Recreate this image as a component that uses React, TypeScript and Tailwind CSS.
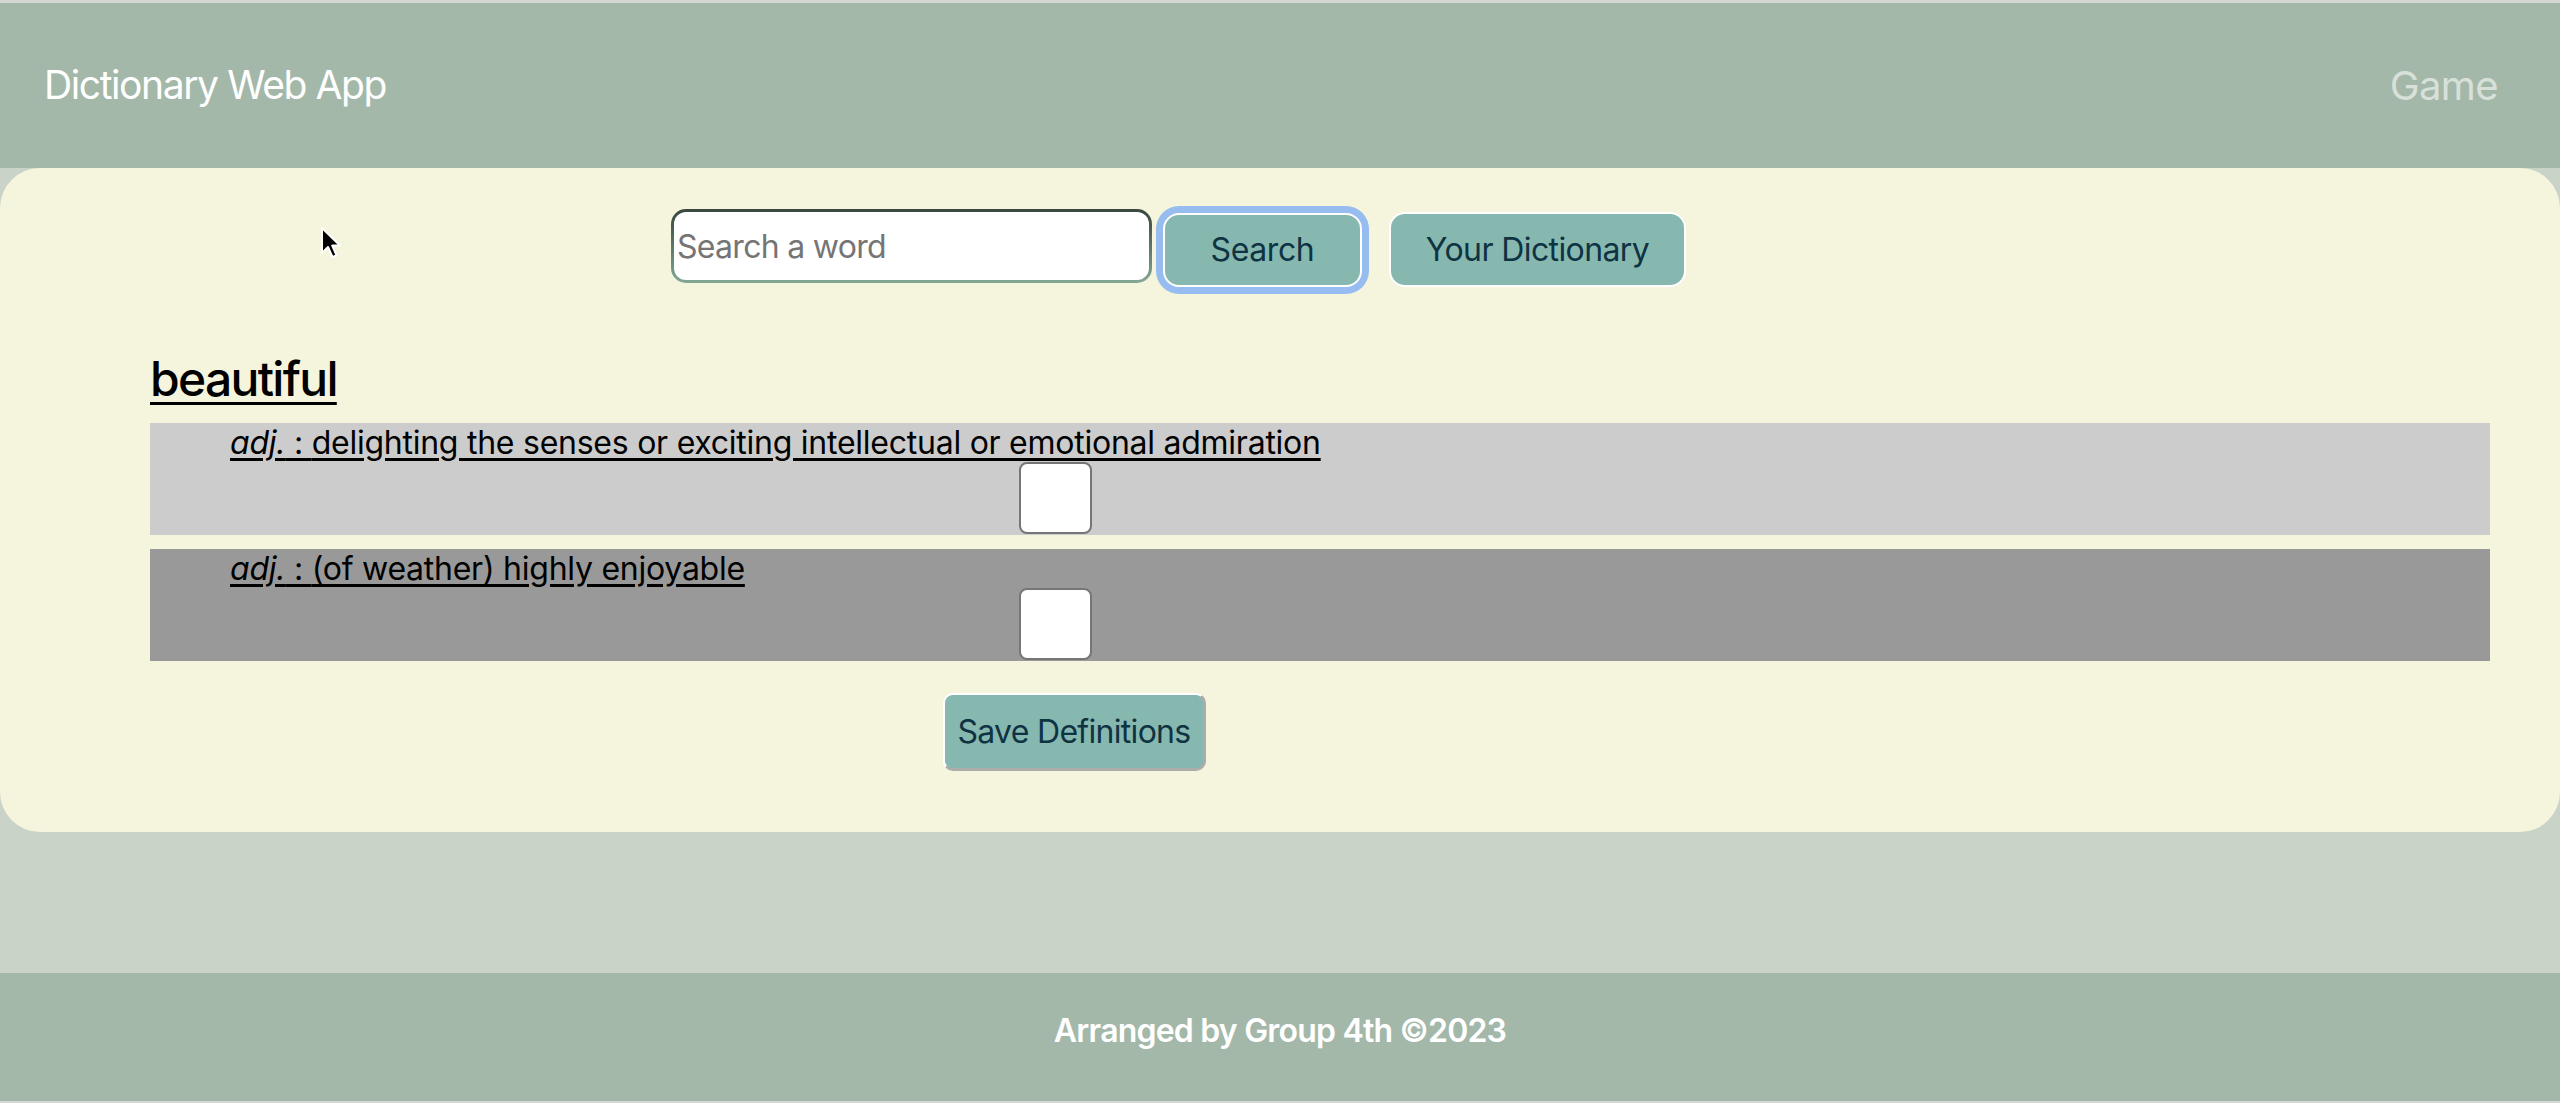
import React from 'react';

const definitions = [
  { pos: 'adj.', text: 'delighting the senses or exciting intellectual or emotional admiration', bg: 'bg-[#cccccc]' },
  { pos: 'adj.', text: '(of weather) highly enjoyable', bg: 'bg-[#999999]' },
];

const Cursor: React.FC = () => (
  <svg className="absolute left-[320px] top-[226px]" width="24" height="34" viewBox="0 0 24 34">
    <path d="M2 2 L2 27 L8 21 L12.5 31 L16.5 29.3 L12.2 19.6 L20 19.6 Z" fill="#000" stroke="#fff" strokeWidth="2" strokeLinejoin="round" />
  </svg>
);

export default function App() {
  return (
    <div className="relative min-h-[1103px] flex flex-col bg-[#cad3c7] font-[Inter,sans-serif]">
      <div className="h-[3px] bg-[#d5d7d5]" />

      <nav className="h-[165px] bg-[#a3b8a9] flex items-center justify-between pl-[44px] pr-[62px]">
        <span className="text-[39px] text-white tracking-[-1.4px]">Dictionary Web App</span>
        <span className="text-[40px] text-[#d8e0da] tracking-[-0.6px]">Game</span>
      </nav>

      <main className="bg-[#f4f5dc] rounded-[40px] pt-[36px] pb-[61px] pl-[150px] pr-[70px]">
        <div className="flex items-start pl-[521px]">
          <div className="mt-[5px] w-[481px] h-[74px] p-[3px] rounded-[15px] bg-gradient-to-b from-[#3a473e] to-[#82a894]">
            <input
              className="w-full h-full bg-white rounded-[12px] px-[3px] text-[32px] text-black placeholder:text-[#757575] outline-none tracking-[-0.7px]"
              placeholder="Search a word"
            />
          </div>
          <button className="mt-[9px] ml-[11px] w-[199px] h-[74px] rounded-[16px] border-2 border-white bg-[#87b8b0] text-[32px] text-[#0e3342] shadow-[0_0_0_7px_#97bdf0] tracking-[-0.4px]">
            Search
          </button>
          <button className="mt-[8px] ml-[27px] w-[297px] h-[75px] rounded-[16px] border-2 border-white bg-[#87b8b0] text-[32px] text-[#0e3342] tracking-[-0.6px]">
            Your Dictionary
          </button>
        </div>

        <h4 className="mt-[63px] text-[48px] leading-[58px] font-medium text-black underline underline-offset-[6px] decoration-[3px] tracking-[-1.7px]">
          beautiful
        </h4>

        <div className="mt-[15px] flex flex-col gap-[14px]">
          {definitions.map((d, i) => (
            <div key={i} className={`${d.bg} h-[112px]`}>
              <a className="block pt-[1px] pl-[80px] text-[32px] leading-[38px] text-black underline underline-offset-[4px] tracking-[-0.25px]" href="#">
                <i>{d.pos}</i> : {d.text}
              </a>
              <div className="pl-[869px]">
                <input
                  type="checkbox"
                  className="appearance-none block w-[73px] h-[72px] bg-white border-2 border-[#767676] rounded-[8px]"
                />
              </div>
            </div>
          ))}
        </div>

        <button className="mt-[32px] ml-[793px] w-[263px] h-[78px] rounded-[10px] border-2 border-t-white border-l-white border-b-[3px] border-r-[3px] border-b-[#acacac] border-r-[#acacac] bg-[#87b8b0] text-[32px] text-[#0e3342] tracking-[-0.7px]">
          Save Definitions
        </button>
      </main>

      <div className="h-[141px]" />

      <footer className="h-[128px] bg-[#a3b8a9] flex items-center justify-center pb-[12px]">
        <span className="text-[32px] font-semibold text-white tracking-[-0.8px]">Arranged by Group 4th ©2023</span>
      </footer>
      <div className="h-[3px] bg-[#d5d7d5]" />

      <Cursor />
    </div>
  );
}
